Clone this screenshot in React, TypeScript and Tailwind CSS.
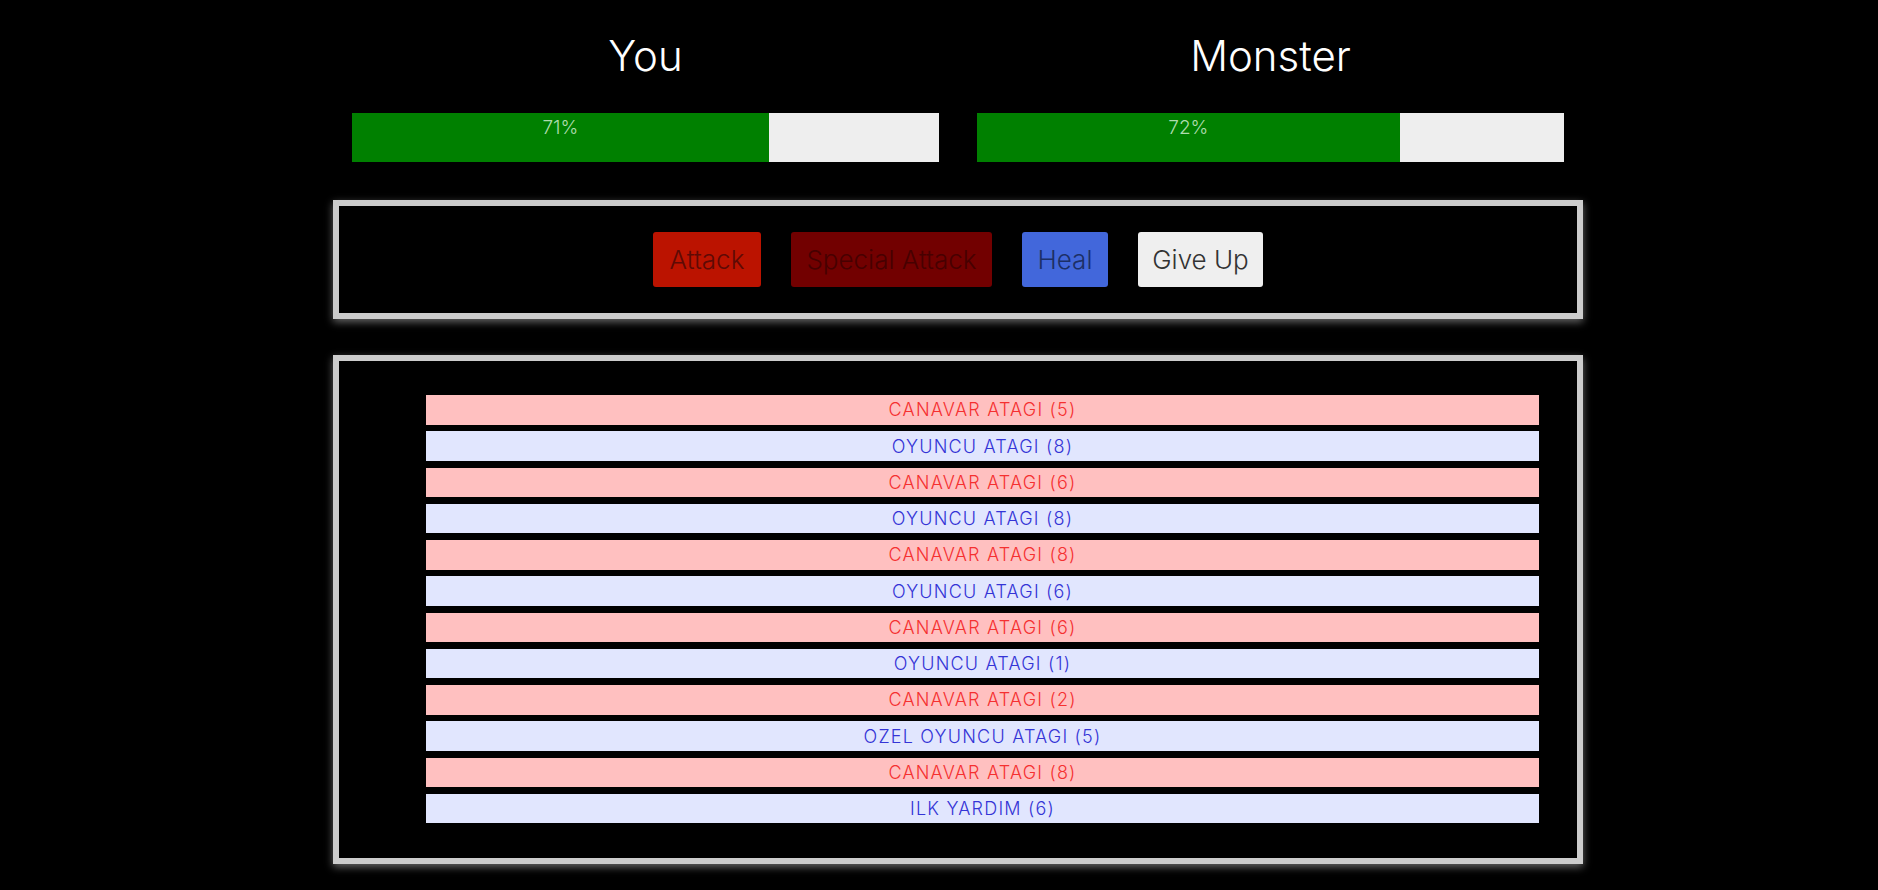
import React from "react";

type Entry = { who: "monster" | "player"; text: string };

const entries: Entry[] = [
  { who: "monster", text: "CANAVAR ATAGI (5)" },
  { who: "player", text: "OYUNCU ATAGI (8)" },
  { who: "monster", text: "CANAVAR ATAGI (6)" },
  { who: "player", text: "OYUNCU ATAGI (8)" },
  { who: "monster", text: "CANAVAR ATAGI (8)" },
  { who: "player", text: "OYUNCU ATAGI (6)" },
  { who: "monster", text: "CANAVAR ATAGI (6)" },
  { who: "player", text: "OYUNCU ATAGI (1)" },
  { who: "monster", text: "CANAVAR ATAGI (2)" },
  { who: "player", text: "OZEL OYUNCU ATAGI (5)" },
  { who: "monster", text: "CANAVAR ATAGI (8)" },
  { who: "player", text: "ILK YARDIM (6)" },
];

function HealthBar({ title, value }: { title: string; value: number }) {
  return (
    <div className="flex flex-col items-center">
      <h2 className="text-[42px] leading-[48px] font-light text-white">{title}</h2>
      <div className="mt-[33px] h-[49px] w-full bg-[#eeeeee] flex">
        <div
          className="h-full bg-[#008000] text-center text-[19px] leading-[29px] font-light text-[#aedcae]"
          style={{ width: `${value}%` }}
        >
          {value}%
        </div>
      </div>
    </div>
  );
}

export default function App() {
  return (
    <div
      className="min-h-screen bg-black flex justify-center pl-[38px]"
      style={{ fontFamily: "Inter, 'Noto Sans', sans-serif" }}
    >
      <div className="w-[1250px] flex flex-col">
        <div className="mt-[32px] px-[19px] grid grid-cols-2 gap-[38px]">
          <HealthBar title="You" value={71} />
          <HealthBar title="Monster" value={72} />
        </div>

        <section className="mt-[38px] border-[6px] border-[#cccccc] shadow-[0_3px_8px_rgba(255,255,255,0.4)] py-[26px] flex justify-center gap-[30px]">
          <button className="w-[108px] h-[55px] rounded-[3px] bg-[#bb1300] text-[#5e0a05] text-[26px] font-light flex items-center justify-center">
            Attack
          </button>
          <button className="w-[201px] h-[55px] rounded-[3px] bg-[#720000] text-[#470000] text-[26px] font-light flex items-center justify-center">
            Special Attack
          </button>
          <button className="w-[86px] h-[55px] rounded-[3px] bg-[#4267db] text-[#1c2f66] text-[26px] font-light flex items-center justify-center">
            Heal
          </button>
          <button className="w-[125px] h-[55px] rounded-[3px] bg-[#efefef] text-[#333333] text-[26px] font-light flex items-center justify-center">
            Give Up
          </button>
        </section>

        <section className="mt-[36px] border-[6px] border-[#cccccc] shadow-[0_3px_8px_rgba(255,255,255,0.4)] pt-[34px] pb-[35px] pl-[87px] pr-[38px]">
          <ul className="flex flex-col gap-[6.75px]">
            {entries.map((e, i) => (
              <li
                key={i}
                className={
                  e.who === "monster"
                    ? "h-[29.5px] flex items-center justify-center bg-[#ffc0c0] text-[#f53030] text-[18px] font-light tracking-[1.2px]"
                    : "h-[29.5px] flex items-center justify-center bg-[#e1e6fe] text-[#3434d6] text-[18px] font-light tracking-[1.2px]"
                }
              >
                {e.text}
              </li>
            ))}
          </ul>
        </section>
      </div>
    </div>
  );
}
